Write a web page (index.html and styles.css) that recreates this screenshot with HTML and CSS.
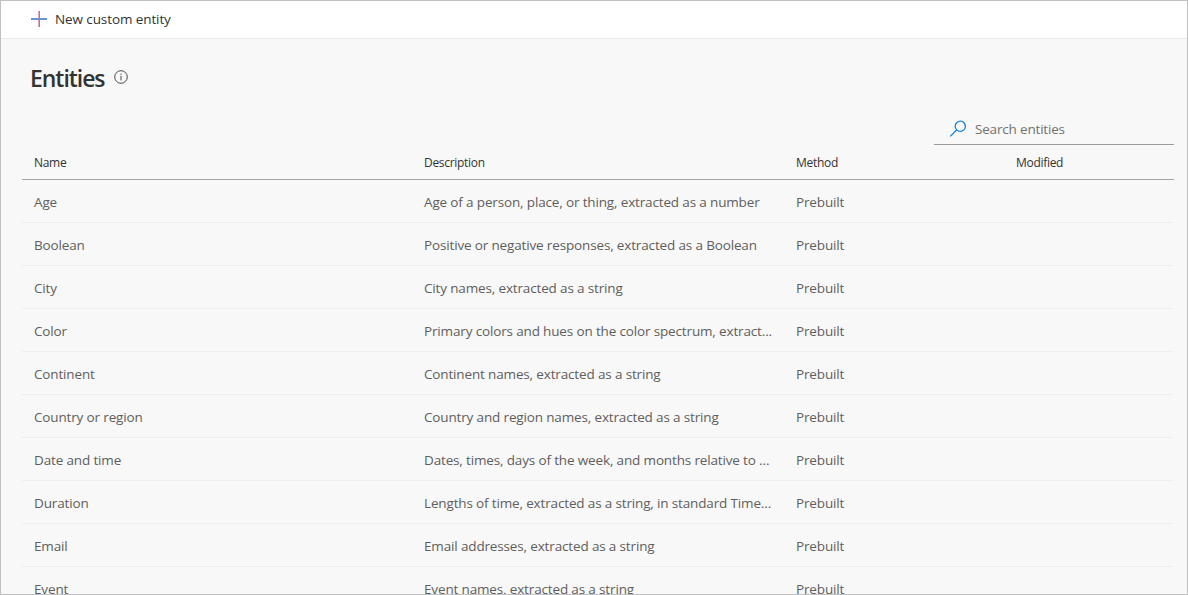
FILE: index.html
```html
<!DOCTYPE html>
<html lang="en">
<head>
<meta charset="utf-8">
<title>Entities</title>
<link rel="stylesheet" href="styles.css">
</head>
<body>
<div class="window">
  <header class="command-bar">
    <button class="command">
      <svg class="plus" width="16" height="16" viewBox="0 0 16 16"><path d="M7.5 0V16" stroke="#e6a5ad"/><path d="M8.5 0V16" stroke="#6593d4"/><path d="M0 8H16" stroke="#6c93d0" stroke-width="2"/></svg>
      <span class="command-label">New custom entity</span>
    </button>
  </header>
  <main class="content">
    <div class="heading">
      <h1>Entities</h1>
      <svg class="info" width="14" height="14" viewBox="0 0 14 14" fill="none" stroke="#4a4a4a"><circle cx="7" cy="7" r="6.3"/><path d="M7 5.8V10.4M7 3.5V4.8"/></svg>
    </div>
    <div class="search">
      <svg width="18" height="18" viewBox="0 0 18 18" fill="none" stroke="#1683d8" stroke-width="1.3"><circle cx="11.3" cy="6.3" r="5.1"/><path d="M7.6 10L1.2 16.4"/></svg>
      <span class="search-label">Search entities</span>
    </div>
    <div class="table">
      <div class="row head"><span>Name</span><span>Description</span><span>Method</span><span>Modified</span></div>
      <div class="row"><span>Age</span><span>Age of a person, place, or thing, extracted as a number</span><span>Prebuilt</span></div>
      <div class="row"><span>Boolean</span><span>Positive or negative responses, extracted as a Boolean</span><span>Prebuilt</span></div>
      <div class="row"><span>City</span><span>City names, extracted as a string</span><span>Prebuilt</span></div>
      <div class="row"><span>Color</span><span>Primary colors and hues on the color spectrum, extract...</span><span>Prebuilt</span></div>
      <div class="row"><span>Continent</span><span>Continent names, extracted as a string</span><span>Prebuilt</span></div>
      <div class="row"><span>Country or region</span><span>Country and region names, extracted as a string</span><span>Prebuilt</span></div>
      <div class="row"><span>Date and time</span><span>Dates, times, days of the week, and months relative to ...</span><span>Prebuilt</span></div>
      <div class="row"><span>Duration</span><span>Lengths of time, extracted as a string, in standard Time...</span><span>Prebuilt</span></div>
      <div class="row"><span>Email</span><span>Email addresses, extracted as a string</span><span>Prebuilt</span></div>
      <div class="row"><span>Event</span><span>Event names, extracted as a string</span><span>Prebuilt</span></div>
    </div>
  </main>
</div>
</body>
</html>
```
FILE: styles.css
```css
* { box-sizing: border-box; }
body { margin: 0; overflow: hidden; font-family: "Open Sans", "Noto Sans", sans-serif; font-size: 13.5px; color: #5f5e5d; }
.window { height: 595px; overflow: hidden; border: 1px solid #c0c0c0; background: #f8f8f8; }
.command-bar { height: 38px; background: #fff; border-bottom: 1px solid #e9e9e9; padding: 0 0 2px 30px; display: flex; }
.command { display: flex; align-items: center; gap: 8px; border: 0; padding: 0; background: none; font: inherit; letter-spacing: -0.1px; color: #333; }
.content { padding: 0 13px 0 21px; }
.heading { display: flex; align-items: center; gap: 9px; height: 78px; padding-left: 8px; color: #333; }
.info { margin-bottom: 2px; }
h1 { margin: 0; font-size: 23px; line-height: 32px; font-weight: 600; letter-spacing: -1.05px; }
.search { width: 240px; height: 28px; margin-left: auto; padding: 0 0 3px 15px; border-bottom: 1px solid #9c9b9a; display: flex; align-items: center; gap: 8px; letter-spacing: -0.18px; color: #72716f; }
.row { display: grid; grid-template-columns: 390px 372px 220px 1fr; align-items: center; height: 43px; padding: 2px 0 0 12px; border-bottom: 1px solid #eeeeee; letter-spacing: -0.15px; white-space: nowrap; }
.head { height: 35px; padding-top: 0; border-color: #a5a4a3; font-size: 12px; letter-spacing: -0.3px; color: #333; }
```
